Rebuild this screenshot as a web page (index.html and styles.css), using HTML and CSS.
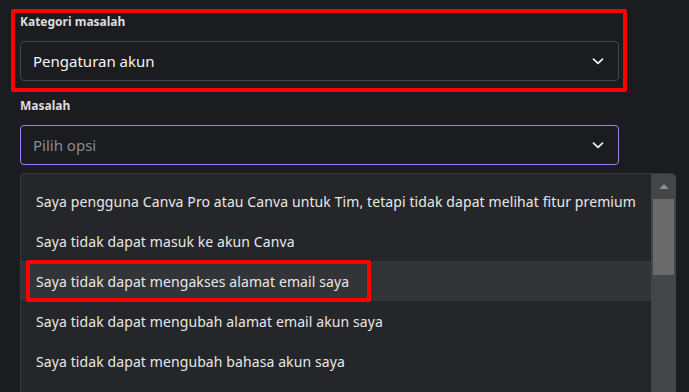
FILE: index.html
```html
<!DOCTYPE html>
<html lang="id">
<head>
<meta charset="utf-8">
<title>Formulir masalah</title>
<link rel="stylesheet" href="styles.css">
</head>
<body>
<div class="page">
  <div class="field annotated">
    <div class="label">Kategori masalah</div>
    <div class="select">
      <span class="value">Pengaturan akun</span>
      <svg class="chev" width="12" height="7" viewBox="0 0 12 7"><path d="M1.5 1.2 L6 5.4 L10.5 1.2" fill="none" stroke="#f2f2f2" stroke-width="1.7" stroke-linecap="round" stroke-linejoin="round"/></svg>
    </div>
  </div>
  <div class="field second">
    <div class="label">Masalah</div>
    <div class="select-wrap">
      <div class="select focused">
        <span class="placeholder">Pilih opsi</span>
        <svg class="chev" width="12" height="7" viewBox="0 0 12 7"><path d="M1.5 1.2 L6 5.4 L10.5 1.2" fill="none" stroke="#f2f2f2" stroke-width="1.7" stroke-linecap="round" stroke-linejoin="round"/></svg>
      </div>
      <div class="menu">
        <ul class="options">
          <li class="option">Saya pengguna Canva Pro atau Canva untuk Tim, tetapi tidak dapat melihat fitur premium</li>
          <li class="option">Saya tidak dapat masuk ke akun Canva</li>
          <li class="option active"><span class="mark"></span>Saya tidak dapat mengakses alamat email saya</li>
          <li class="option">Saya tidak dapat mengubah alamat email akun saya</li>
          <li class="option">Saya tidak dapat mengubah bahasa akun saya</li>
        </ul>
        <div class="scrollbar">
          <div class="arrow"></div>
          <div class="thumb"></div>
        </div>
      </div>
    </div>
  </div>
</div>
</body>
</html>
```
FILE: styles.css
```css
* { box-sizing: border-box; }
html, body {
  margin: 0;
  height: 100%;
  overflow: hidden;
  background: #1b1c1f;
}
body {
  font-family: "Noto Sans", "Open Sans", sans-serif;
  color: #e6e6e6;
}
.page {
  padding: 0 70px 0 20px;
}
.annotated {
  margin: 9px -8px 0 -9px;
  border: 4px solid #ff0000;
  border-radius: 2px;
  padding: 1px 4px 7px 5px;
}
.label {
  font-size: 12px;
  line-height: 16px;
  font-weight: 700;
  color: #dcdcdc;
  margin-bottom: 11px;
}
.second {
  margin-top: 6px;
}
.select-wrap {
  position: relative;
}
.select {
  height: 40px;
  border: 1px solid #45464a;
  border-radius: 4px;
  display: flex;
  align-items: center;
  justify-content: space-between;
  padding: 0 14px 0 12px;
  font-size: 15px;
}
.select.focused {
  border-color: #a07ff0;
}
.value {
  color: #f3f3f3;
}
.placeholder {
  color: #8b8c8f;
}
.chev {
  display: block;
}
.menu {
  position: absolute;
  top: 48px;
  left: 0;
  width: 656px;
  height: 230px;
  background: #252629;
  border: 1px solid #38393c;
  border-right: none;
  border-bottom: none;
  border-radius: 5px 5px 0 0;
  display: flex;
  overflow: hidden;
}
.options {
  list-style: none;
  margin: 0;
  padding: 7px 0 0;
  flex: 1;
}
.option {
  position: relative;
  height: 40px;
  display: flex;
  align-items: center;
  padding-left: 15px;
  font-size: 14px;
  letter-spacing: 0.1px;
  color: #e8e8e8;
  white-space: nowrap;
}
.option.active {
  background: #333437;
}
.mark {
  position: absolute;
  left: 5px;
  top: -1px;
  width: 345px;
  height: 42px;
  border: 4px solid #ff0000;
  border-radius: 2px;
}
.scrollbar {
  width: 25px;
  background: #444547;
  display: flex;
  flex-direction: column;
  align-items: center;
  padding-top: 10px;
}
.arrow {
  width: 0;
  height: 0;
  border-left: 5.5px solid transparent;
  border-right: 5.5px solid transparent;
  border-bottom: 5px solid #8d8d8d;
}
.thumb {
  margin-top: 10px;
  width: 21px;
  height: 76px;
  background: #6a6a6b;
}
```
